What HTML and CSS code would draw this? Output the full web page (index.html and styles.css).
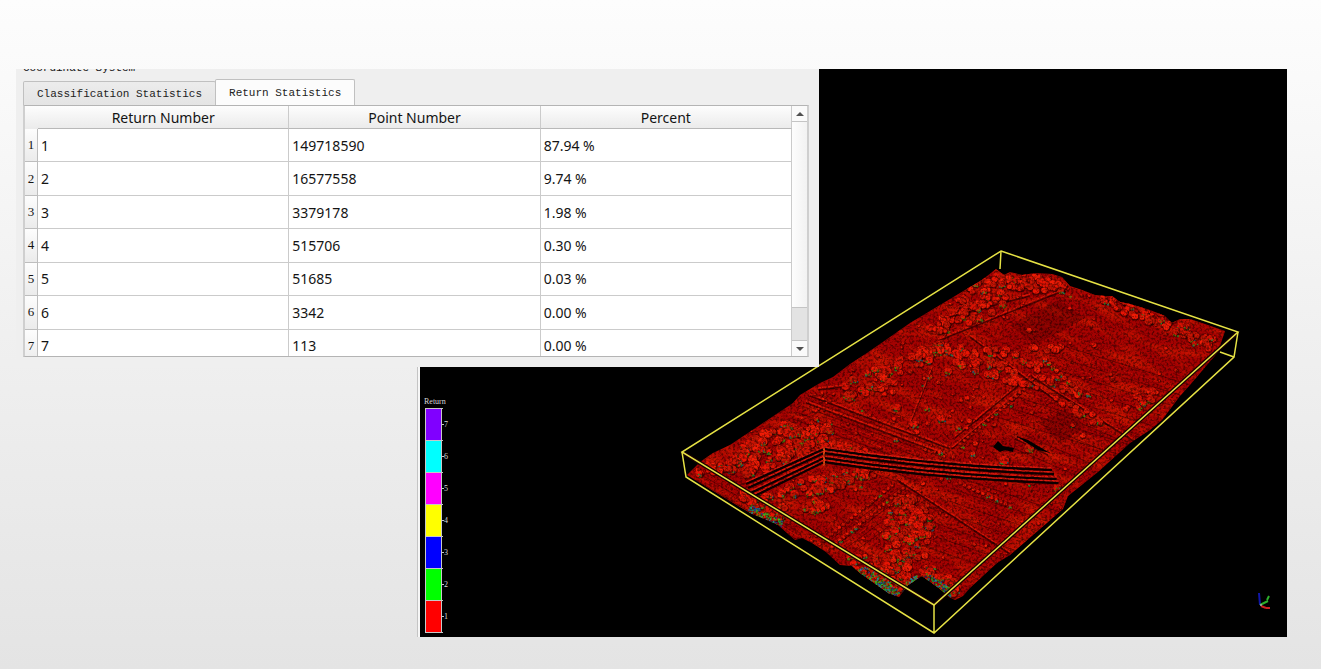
FILE: index.html
```html
<!DOCTYPE html>
<html lang="en">
<head>
<meta charset="utf-8">
<title>Return Statistics</title>
<link rel="stylesheet" href="styles.css">
</head>
<body>
<main class="stage">
  <section class="viewer" aria-label="Point cloud view">
    <svg class="scene" viewBox="420 69 867 568" role="img" aria-label="Point cloud coloured by return number">
      <defs>
        <clipPath id="ground"><path d="M996 269L1004 275 1010 272 1022 275 1035 273 1052 274 1062 277 1070 286 1082 290 1095 295 1105 296 1112 296 1120 302 1130 304 1150 310 1165 316 1172 323 1180 319 1190 319 1205 324 1225 331 1222 340 1218 352 1190 385 1180 396 1162 420 1150 430 1130 443 1098 472 1068 496 1063 509 1010 555 997 563 970 588 963 596 955 600 949 597 940 589 922 576 908 585 899 597 888 593 860 573 852 566 840 565 826 552 812 543 802 538 795 540 787 533 778 525 767 520 752 514 740 507 687 475 700 462 713 453 730 445 757 427 775 415 793 403 800 395 820 383 833 377 850 364 867 353 890 337 910 323 940 305 960 293 982 280Z"/></clipPath>
        <filter id="grain" x="0" y="0" width="100%" height="100%">
          <feTurbulence type="fractalNoise" baseFrequency="0.42" numOctaves="3" seed="8"/>
          <feColorMatrix values="0 0 0 0 0  0 0 0 0 0  0 0 0 0 0  3.2 0 0 0 -1.35"/>
        </filter>
        <filter id="patches" x="0" y="0" width="100%" height="100%">
          <feTurbulence type="fractalNoise" baseFrequency="0.025 0.09" numOctaves="3" seed="21"/>
          <feColorMatrix values="0 0 0 0 .9  0 0 0 0 .02  0 0 0 0 0  2.6 0 0 0 -1.1"/>
        </filter>
      </defs>
      <g clip-path="url(#ground)">
        <rect x="680" y="260" width="560" height="350" fill="#a40202"/>
        <g transform="rotate(20 950 430)"><rect x="640" y="170" width="640" height="540" filter="url(#patches)" opacity=".5"/></g>
        <g id="terrain"></g>
        <rect x="680" y="260" width="560" height="350" filter="url(#grain)" opacity=".45"/>
      </g>
      <g class="halo"><path d="M682 452L934 605 1238 332"/></g>
      <g class="box">
        <path d="M1001 251L1238 332 934 605 682 452Z"/>
        <path d="M682 452L686 477 934 633 1234 357 1238 332M934 605V633M1001 251L1000 269M1220 352L1234 357"/>
      </g>
      <g class="legend">
        <text x="424" y="404">Return</text>
        <g id="scale"></g>
      </g>
      <g class="axes">
        <path stroke="#1016a8" d="M1260 605L1259 593"/>
        <path stroke="#2cae2c" d="M1260 605L1268 601M1267 600L1269 596"/>
        <path stroke="#c82020" d="M1261 606L1266 608M1266 608H1270"/>
        <circle cx="1261" cy="605" r="1" fill="#aaa"/>
      </g>
    </svg>
  </section>

  <section class="panel">
    <div class="caption"><span>Coordinate System</span></div>
    <div class="tabs" role="tablist">
      <button class="tab" role="tab" aria-selected="false">Classification Statistics</button>
      <button class="tab active" role="tab" aria-selected="true">Return Statistics</button>
    </div>
    <div class="frame">
      <div class="rows">
        <table class="stats">
          <colgroup><col class="index"><col><col><col></colgroup>
          <thead><tr><td class="corner"></td><th scope="col">Return Number</th><th scope="col">Point Number</th><th scope="col">Percent</th></tr></thead>
          <tbody>
            <tr><th scope="row">1</th><td>1</td><td>149718590</td><td>87.94 %</td></tr>
            <tr><th scope="row">2</th><td>2</td><td>16577558</td><td>9.74 %</td></tr>
            <tr><th scope="row">3</th><td>3</td><td>3379178</td><td>1.98 %</td></tr>
            <tr><th scope="row">4</th><td>4</td><td>515706</td><td>0.30 %</td></tr>
            <tr><th scope="row">5</th><td>5</td><td>51685</td><td>0.03 %</td></tr>
            <tr><th scope="row">6</th><td>6</td><td>3342</td><td>0.00 %</td></tr>
            <tr><th scope="row">7</th><td>7</td><td>113</td><td>0.00 %</td></tr>
          </tbody>
        </table>
      </div>
      <div class="scrollbar">
        <button class="arrow" aria-label="Scroll up"><svg viewBox="0 0 8 4"><path d="M0 4L4 0 8 4Z"/></svg></button>
        <div class="thumb"></div>
        <div class="track"></div>
        <button class="arrow" aria-label="Scroll down"><svg viewBox="0 0 8 4"><path d="M0 0H8L4 4Z"/></svg></button>
      </div>
    </div>
  </section>
</main>
<script src="scene.js"></script>
</body>
</html>
```
FILE: styles.css
```css
* { box-sizing: border-box; }

body {
  margin: 0;
  min-height: 100vh;
  background: linear-gradient(#fdfdfd, #f0f0f0 50%, #e4e4e4);
  font-family: "Noto Sans", "Open Sans", sans-serif;
  font-size: 14px;
  color: #141414;
}

.stage {
  display: grid;
  grid-template-columns: 401fr 402fr 468fr;
  align-items: start;
  padding: 69px 34px 32px 16px;
}

.viewer {
  grid-area: 1 / 2 / 2 / 4;
  border-left: 1px solid #c4c4c4;
  padding-left: 2px;
  background: #f6f6f6;
}

.scene { display: block; width: 100%; background: #000; }

.box { fill: none; stroke: #e6e244; stroke-width: 1.5; }
.halo { fill: none; stroke: #180000; stroke-width: 4; }
.axes { fill: none; stroke-width: 2; }

.legend { font: 8px "Liberation Serif", serif; fill: #d8d8d8; }
.legend .tick { stroke: #c8c8c8; fill: none; }

.panel {
  grid-area: 1 / 1 / 2 / 3;
  z-index: 1;
  padding: 0 10px 10px 7px;
  background: #efefef;
}

.caption {
  display: flex;
  align-items: flex-end;
  height: 5px;
  overflow: hidden;
  font: 11px/12px "Liberation Mono", monospace;
}

.tabs { display: flex; align-items: flex-end; height: 31px; }

.tab {
  height: 24px;
  padding: 1px 13px 0;
  border: 1px solid #c0c0c0;
  border-bottom: 0;
  border-radius: 2px 2px 0 0;
  background: linear-gradient(#ececec, #e4e4e4);
  font: 11px "Liberation Mono", monospace;
  color: #222;
}

.tab.active {
  z-index: 1;
  height: 26px;
  margin-left: -1px;
  background: #fcfcfc;
}

.frame {
  display: flex;
  height: 252px;
  border: 1px solid #b4b4b4;
  border-width: 1px 2px 1px 2px;
  border-right-color: #cfcfcf;
  border-left-color: #cfcfcf;
  background: #fff;
}

.rows { flex: 1; overflow: hidden; }

.stats {
  width: 100%;
  height: 257px;
  border-collapse: separate;
  border-spacing: 0;
  table-layout: fixed;
}

.index { width: 13px; }

.stats th, .stats td { padding: 0 2px; border: 0 solid #cbcbcb; }
.stats tbody td { padding: 0 3px; }

.stats thead th, .corner {
  height: 23px;
  border-bottom: 1px solid #b8b8b8;
  background: linear-gradient(#fdfdfd, #ebebeb);
  font-weight: 400;
}

.stats thead th { border-right-width: 1px; }
.stats tbody td { border-width: 0 1px 1px 0; }

.stats tbody th {
  padding: 0;
  border-width: 0 1px 1px 0;
  border-color: #bdbdbd;
  background: linear-gradient(#fdfdfd, #ebebeb);
  font: 13px "Liberation Serif", serif;
}

.scrollbar {
  display: flex;
  flex-direction: column;
  width: 15px;
}

.arrow {
  display: flex;
  align-items: center;
  justify-content: center;
  height: 15px;
  padding: 0;
  border: 0;
  background: #fafafa;
}

.arrow svg { width: 8px; height: 4px; fill: #505050; }
.thumb { flex: 188; border: 1px solid #c4c4c4; border-width: 1px 0; background: linear-gradient(90deg, #fdfdfd, #f2f2f2); }
.track { flex: 32; border-bottom: 1px solid #c4c4c4; background: #e3e3e3; }
```
FILE: scene.js
```js
const NS = "http://www.w3.org/2000/svg";
const terrain = document.getElementById("terrain");
const scale = document.getElementById("scale");

function add(parent, name, attrs) {
  const el = document.createElementNS(NS, name);
  for (const key in attrs) el.setAttribute(key, attrs[key]);
  parent.appendChild(el);
  return el;
}

let state = 12345;
function rnd() {
  state = (state * 1664525 + 1013904223) % 4294967296;
  return state / 4294967296;
}
const pick = list => list[Math.floor(rnd() * list.length)];

function line(x1, y1, x2, y2, stroke, width, opacity = 1, dash = "none") {
  add(terrain, "path", { d: `M${x1} ${y1}L${x2} ${y2}`, stroke, "stroke-width": width, opacity, "stroke-dasharray": dash });
}

// One tree crown: dark outline, lit top, optional lower-return specks.
function tree(x, y, r, green) {
  add(terrain, "ellipse", { cx: x + 0.4, cy: y + 0.7, rx: r + 0.6, ry: r + 0.5, fill: "#2c0000", opacity: 0.55 });
  add(terrain, "ellipse", { cx: x, cy: y, rx: r, ry: r * 0.9, fill: pick(["#e81404", "#d81204", "#f01c06", "#c81404"]) });
  if (rnd() < green) {
    for (let i = 0; i < 5; i++) {
      add(terrain, "rect", {
        x: x + (rnd() - 0.5) * r * 2, y: y + rnd() * r, width: 1.4, height: 1.4,
        fill: pick(["#3a8a10", "#5a7008", "#8a5a08", "#209030", "#206070"])
      });
    }
  }
}

function grove(cx, cy, rx, ry, angle, count, rmin, rmax, green) {
  const a = angle * Math.PI / 180, pts = [];
  for (let i = 0; i < count; i++) {
    const t = rnd() * Math.PI * 2, d = Math.sqrt(rnd());
    const u = Math.cos(t) * d * rx, v = Math.sin(t) * d * ry;
    pts.push([cx + u * Math.cos(a) - v * Math.sin(a), cy + u * Math.sin(a) + v * Math.cos(a)]);
  }
  pts.sort((p, q) => p[1] - q[1]);
  pts.forEach(p => tree(p[0], p[1], rmin + rnd() * (rmax - rmin), green));
}

function beads(x1, y1, x2, y2, step, r) {
  const n = Math.floor(Math.hypot(x2 - x1, y2 - y1) / step);
  for (let i = 0; i <= n; i++) tree(x1 + (x2 - x1) * i / n, y1 + (y2 - y1) * i / n, r, 0.1);
}

// Parallel furrows of a field, stepped from one edge to the other.
function furrows(x1, y1, x2, y2, dx, dy, n) {
  for (let i = 0; i < n; i++) {
    line(x1 + dx * i, y1 + dy * i, x2 + dx * i, y2 + dy * i, i % 2 ? "#e01808" : "#300000", 1, 0.45);
  }
}

furrows(808, 400, 950, 452, -3, 3, 13);
furrows(1060, 345, 1190, 385, -5, 5, 15);
furrows(830, 540, 905, 485, 4, 2, 8);
furrows(960, 478, 1060, 512, -5, 5, 13);
furrows(1050, 410, 1120, 440, -7, 6, 9);
furrows(700, 474, 800, 533, -2, 3, 4);
add(terrain, "path", { d: "M1010 325L1058 300 1085 318 1035 345Z", fill: "#700000", opacity: 0.5 });
add(terrain, "path", { d: "M1040 422L1065 410 1085 425 1060 445Z", fill: "#700000", opacity: 0.5 });

// Roads, embankments and field edges.
[
  [810, 394, 950, 447], [806, 401, 945, 453], [1038, 375, 952, 447], [1030, 374, 955, 436],
  [970, 335, 1060, 402], [1032, 375, 1135, 440], [938, 339, 1058, 291], [932, 367, 908, 427],
  [897, 478, 1010, 552], [1015, 437, 1048, 453], [960, 305, 945, 335], [950, 315, 1030, 294],
  [818, 388, 852, 384]
].forEach(s => {
  line(s[0], s[1] + 2, s[2], s[3] + 2, "#200000", 1.6, 0.65);
  line(s[0], s[1], s[2], s[3], "#e01808", 1.4, 0.9);
});

for (let i = 0; i < 450; i++) tree(690 + rnd() * 545, 265 + rnd() * 335, 0.6 + rnd() * 1.1, 0.05);
grove(970, 420, 160, 80, -20, 60, 1.5, 2.8, 0.2);

grove(1030, 283, 38, 8, 8, 55, 2, 4, 0.15);
grove(985, 292, 30, 14, -25, 38, 2, 4, 0.2);
grove(965, 316, 48, 9, -22, 42, 2, 4, 0.15);
grove(1158, 320, 64, 7, 22, 58, 2, 4, 0.25);
grove(1200, 340, 18, 7, 20, 14, 2, 3.5, 0.3);
grove(1020, 350, 45, 5, -4, 20, 2.5, 4, 0.2);
grove(983, 364, 56, 10, 20, 58, 2, 4.5, 0.4);
grove(884, 375, 48, 12, -25, 52, 2, 4.5, 0.35);
grove(927, 355, 9, 8, 0, 13, 3, 5, 0.4);
grove(1050, 377, 35, 6, 32, 24, 2, 4, 0.15);
grove(1078, 410, 28, 5, 28, 18, 2, 3.5, 0.2);
grove(1140, 400, 22, 7, -20, 16, 2, 3.5, 0.2);
grove(780, 446, 56, 19, -24, 115, 2, 5, 0.45);
grove(718, 466, 24, 7, -20, 20, 2, 3.5, 0.3);
grove(845, 448, 25, 6, 12, 24, 2, 4.5, 0.2);
grove(826, 482, 50, 9, -15, 55, 2, 4.5, 0.6);
grove(815, 506, 11, 6, 0, 14, 2, 4, 0.6);
grove(763, 504, 26, 12, 26, 48, 2, 4, 0.8);
grove(908, 532, 25, 36, 0, 88, 2, 5, 0.5);
grove(881, 572, 38, 12, 27, 65, 2, 4, 0.7);
grove(940, 580, 23, 8, 32, 30, 2, 4, 0.7);
[[897, 407, 4], [914, 424, 4], [941, 418, 4], [849, 396, 6], [958, 427, 3], [1004, 460, 5], [1029, 448, 5], [1057, 487, 4], [948, 371, 4]]
  .forEach(t => tree(t[0], t[1], t[2], 1));

beads(815, 547, 892, 485, 5, 1.8);
beads(828, 550, 903, 488, 5, 1.8);
beads(960, 444, 1028, 386, 5, 1.6);
beads(1045, 360, 1080, 392, 5, 2.4);
beads(960, 483, 1010, 506, 5, 1.8);

// Green and blue returns where the cut edge exposes lower vegetation.
[[765, 516, 18, 4, 26], [874, 578, 18, 5, 30], [886, 588, 13, 5, 30], [910, 582, 9, 3, -35], [937, 584, 18, 4, 32]].forEach(c => {
  const a = c[4] * Math.PI / 180;
  for (let i = 0; i < 100; i++) {
    const u = (rnd() * 2 - 1) * c[2], v = (rnd() * 2 - 1) * c[3];
    add(terrain, "rect", {
      x: c[0] + u * Math.cos(a) - v * Math.sin(a), y: c[1] + u * Math.sin(a) + v * Math.cos(a),
      width: 1.6, height: 1.6, fill: pick(["#18a830", "#28c020", "#2080a0", "#1840a0", "#609010", "#c02008"])
    });
  }
});

// Gaps without data.
add(terrain, "path", { d: "M993 447L998 441 1003 446 1014 448 1013 452 1005 450 1000 452Z", fill: "#000" });
add(terrain, "path", { d: "M1016 436L1028 440 1050 453 1038 450Z", fill: "#000" });

// Overhead conductors.
[0, 4, 9, 13].forEach(o => {
  line(746 + o / 2, 484 + o, 824, 449 + o, "#100000", 2.4);
  line(746 + o / 2, 482 + o, 824, 447 + o, "#e01c10", 1.3);
  [["#100000", 2.4, 0], ["#e01c10", 1.3, -2]].forEach(s => add(terrain, "path", {
    d: `M824 ${449 + o + s[2]}Q935 ${466 + o + s[2]} ${1052 + o / 2} ${470 + o + s[2]}`,
    fill: "none", stroke: s[0], "stroke-width": s[1]
  }));
});
line(824, 447, 824, 466, "#e04010", 2);

// Colour scale, one band per return number.
["#8000ff", "#00ffff", "#ff00ff", "#ffff00", "#0000ff", "#00ff00", "#ff0000"].forEach((fill, i) => {
  const y = 408 + i * 32;
  add(scale, "rect", { x: 425, y, width: 16, height: 32, fill });
  add(scale, "path", { class: "tick", d: `M425 ${y + 0.5}H443M441.5 ${y}V${y + 32}M441 ${y + 16.5}H444` });
  add(scale, "text", { x: 444, y: y + 19 }).textContent = 7 - i;
});
add(scale, "path", { class: "tick", d: "M425.5 408V632M425 632.5H443" });
```
